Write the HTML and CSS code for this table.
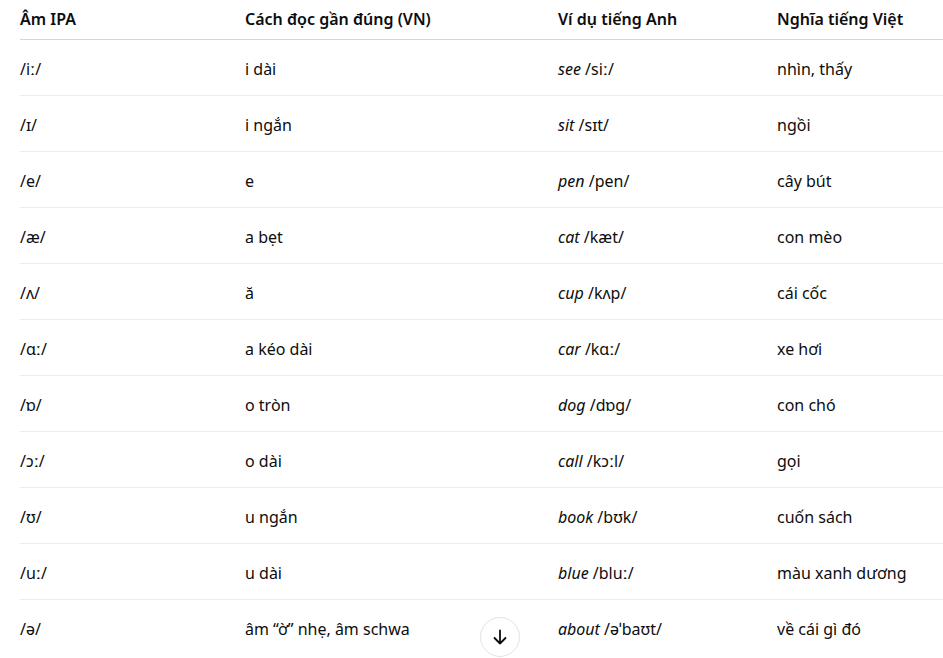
FILE: index.html
```html
<!DOCTYPE html>
<html lang="vi">
<head>
<meta charset="utf-8">
<link rel="stylesheet" href="styles.css">
</head>
<body>
<div class="wrap">
<table class="ipa">
<thead>
<tr><th class="c1">Âm IPA</th><th class="c2">Cách đọc gần đúng (VN)</th><th class="c3">Ví dụ tiếng Anh</th><th class="c4">Nghĩa tiếng Việt</th></tr>
</thead>
<tbody>
<tr><td>/iː/</td><td>i dài</td><td><em>see</em> /siː/</td><td>nhìn, thấy</td></tr>
<tr><td>/ɪ/</td><td>i ngắn</td><td><em>sit</em> /sɪt/</td><td>ngồi</td></tr>
<tr><td>/e/</td><td>e</td><td><em>pen</em> /pen/</td><td>cây bút</td></tr>
<tr><td>/æ/</td><td>a bẹt</td><td><em>cat</em> /kæt/</td><td>con mèo</td></tr>
<tr><td>/ʌ/</td><td>ă</td><td><em>cup</em> /kʌp/</td><td>cái cốc</td></tr>
<tr><td>/ɑː/</td><td>a kéo dài</td><td><em>car</em> /kɑː/</td><td>xe hơi</td></tr>
<tr><td>/ɒ/</td><td>o tròn</td><td><em>dog</em> /dɒg/</td><td>con chó</td></tr>
<tr><td>/ɔː/</td><td>o dài</td><td><em>call</em> /kɔːl/</td><td>gọi</td></tr>
<tr><td>/ʊ/</td><td>u ngắn</td><td><em>book</em> /bʊk/</td><td>cuốn sách</td></tr>
<tr><td>/uː/</td><td>u dài</td><td><em>blue</em> /bluː/</td><td>màu xanh dương</td></tr>
<tr><td>/ə/</td><td>âm “ờ” nhẹ, âm schwa</td><td><em>about</em> /əˈbaʊt/</td><td>về cái gì đó</td></tr>
</tbody>
</table>
</div>
<button class="scroll-btn" aria-label="Cuộn xuống">
<svg width="20" height="20" viewBox="0 0 20 20" fill="none" stroke="#0d0d0d" stroke-width="1.8" stroke-linecap="round" stroke-linejoin="round"><path d="M10 3.5v13M4.5 11l5.5 5.5 5.5-5.5"/></svg>
</button>
</body>
</html>
```
FILE: styles.css
```css
html, body {
  margin: 0;
  padding: 0;
  background: #fff;
  overflow: hidden;
}
body {
  font-family: "Noto Sans", "Open Sans", sans-serif;
  font-size: 16px;
  color: #0d0d0d;
  width: 943px;
  height: 658px;
  position: relative;
}
.wrap {
  padding-left: 20px;
}
.ipa {
  border-collapse: collapse;
  width: 1000px;
  table-layout: fixed;
}
.c1 { width: 225px; }
.c2 { width: 313px; }
.c3 { width: 219px; }
.c4 { width: 243px; }
th {
  text-align: left;
  font-weight: 600;
  height: 37px;
  padding: 0 0 2px 0;
  vertical-align: middle;
  border-bottom: 1px solid #d6d6d6;
  line-height: 20px;
  white-space: nowrap;
}
td {
  height: 52px;
  padding: 3px 0 0 0;
  vertical-align: middle;
  border-bottom: 1px solid #ececec;
  line-height: 24px;
  white-space: nowrap;
}
tbody tr:last-child td { border-bottom: none; }
em { font-style: italic; }
.scroll-btn {
  position: absolute;
  left: 480px;
  top: 617px;
  width: 40px;
  height: 40px;
  border-radius: 50%;
  border: 1px solid #e3e3e3;
  background: #fff;
  display: flex;
  align-items: center;
  justify-content: center;
  padding: 0;
}
```
